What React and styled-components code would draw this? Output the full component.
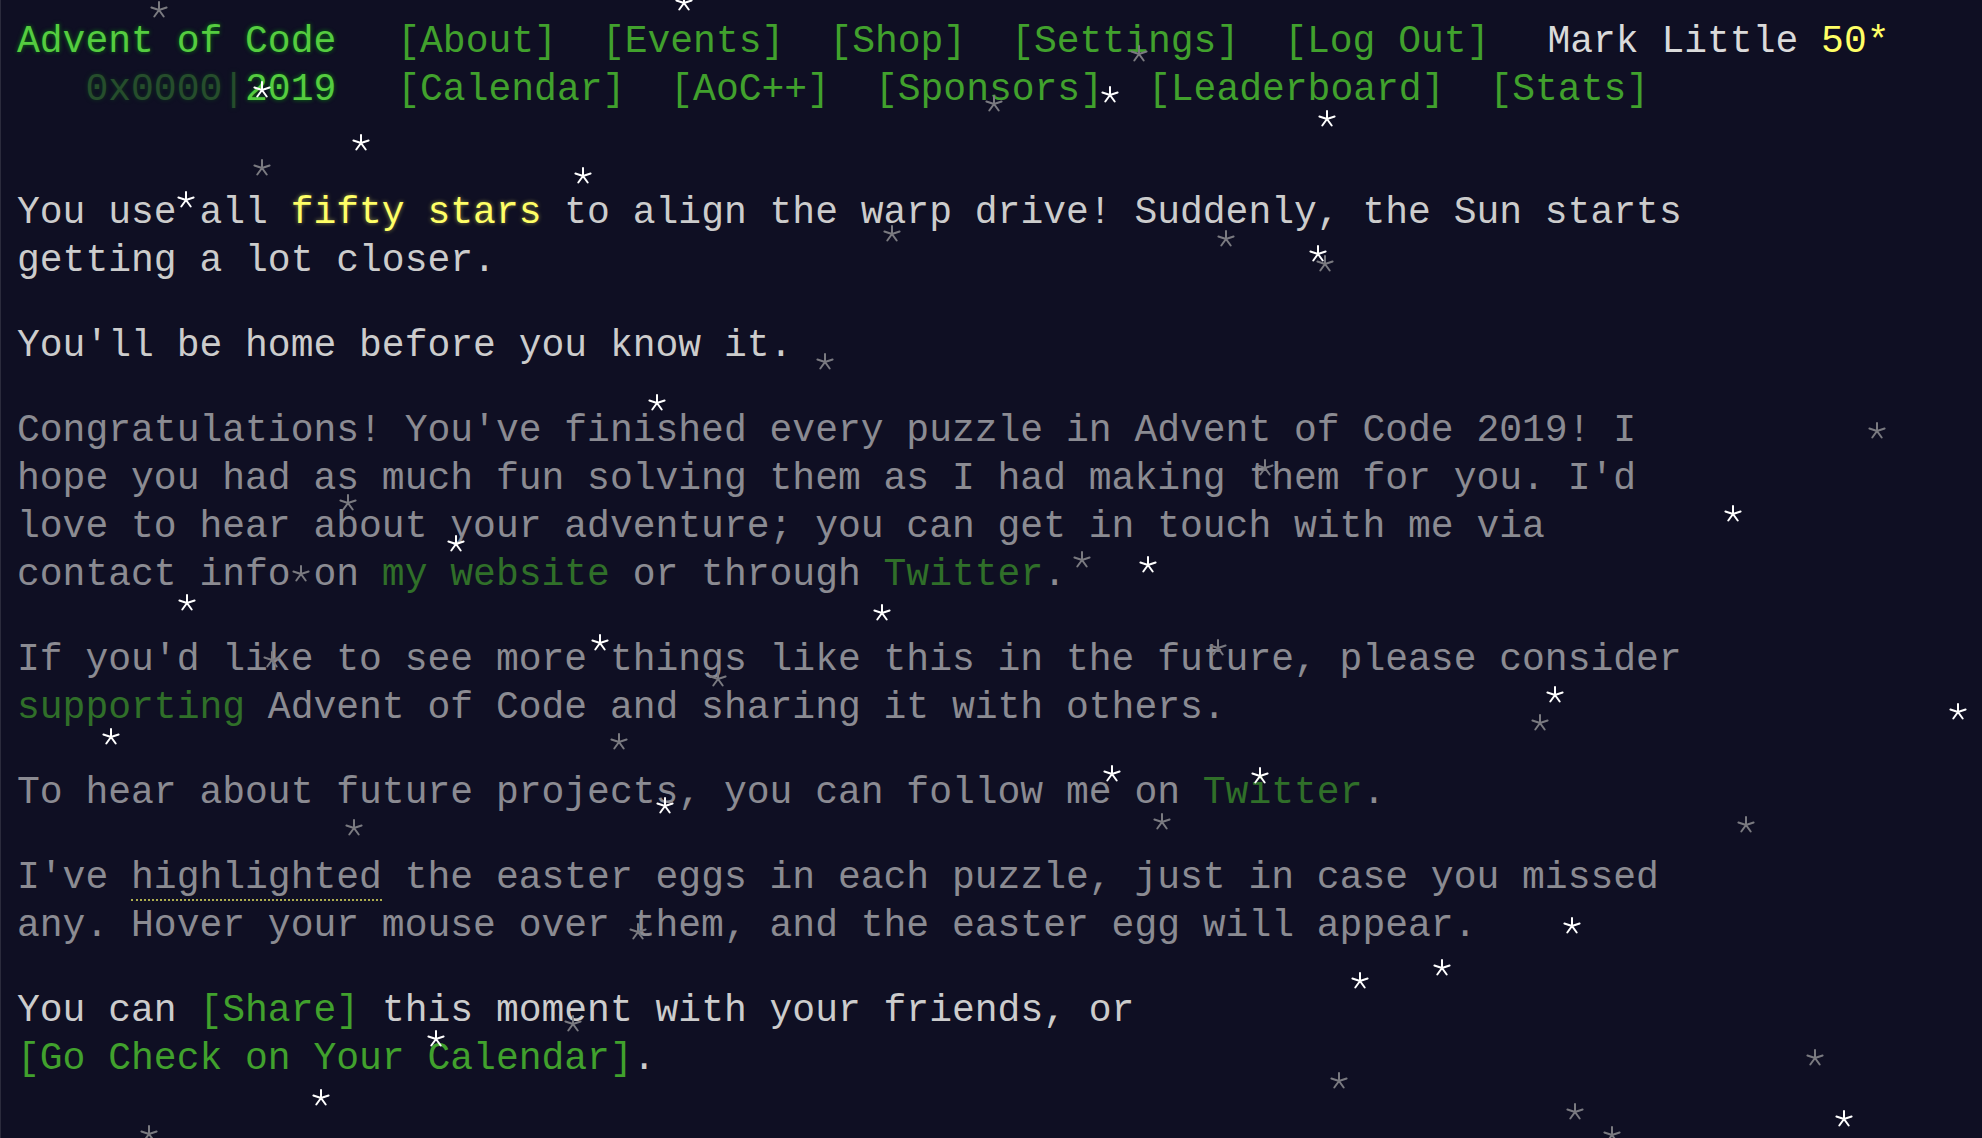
import React from "react";
import styled, { createGlobalStyle } from "styled-components";

const GlobalStyle = createGlobalStyle`
  html, body {
    margin: 0;
    padding: 0;
    background: #0f0f23;
  }
`;

const stars = [
  [159, 10, 0], [684, 3, 1], [262, 90, 1], [1139, 54, 0], [994, 104, 0],
  [1110, 95, 1], [1327, 119, 1], [361, 143, 1], [262, 168, 0], [583, 176, 1],
  [186, 200, 1], [892, 234, 0], [1226, 239, 0], [1318, 254, 1], [1325, 264, 0],
  [825, 362, 0], [657, 403, 1], [1877, 431, 0], [1265, 468, 0], [348, 503, 0],
  [1733, 514, 1], [456, 544, 1], [1082, 560, 0], [1148, 565, 1], [301, 574, 0],
  [187, 603, 1], [882, 613, 1], [600, 643, 1], [272, 660, 0], [1218, 648, 0],
  [718, 679, 0], [1555, 695, 1], [1958, 712, 1], [1540, 723, 0], [111, 737, 1],
  [619, 742, 0], [1112, 774, 1], [1260, 776, 1], [665, 806, 1], [1162, 822, 0],
  [1746, 825, 0], [354, 828, 0], [638, 932, 0], [1572, 926, 1], [1360, 981, 1],
  [1442, 968, 1], [573, 1024, 0], [436, 1039, 1], [1815, 1058, 0], [1339, 1081, 0],
  [321, 1098, 1], [1575, 1112, 0], [1844, 1119, 1], [149, 1134, 0], [1612, 1135, 0],
];

const App = () => (
  <Page>
    <GlobalStyle />
    <Header>
      <HeaderRow>
        <Title>Advent of Code</Title>
        <Nav>
          <NavLink href="#">[About]</NavLink>
          <NavLink href="#">[Events]</NavLink>
          <NavLink href="#">[Shop]</NavLink>
          <NavLink href="#">[Settings]</NavLink>
          <NavLink href="#">[Log Out]</NavLink>
          <User>
            Mark Little <StarCount>50*</StarCount>
          </User>
        </Nav>
      </HeaderRow>
      <HeaderRow>
        <Title>
          {"\u00a0\u00a0\u00a0"}
          <Faded>0x0000|</Faded>2019
        </Title>
        <Nav>
          <NavLink href="#">[Calendar]</NavLink>
          <NavLink href="#">[AoC++]</NavLink>
          <NavLink href="#">[Sponsors]</NavLink>
          <NavLink href="#">[Leaderboard]</NavLink>
          <NavLink href="#">[Stats]</NavLink>
        </Nav>
      </HeaderRow>
    </Header>

    <Article>
      <Para>
        You use all <Glow>fifty stars</Glow> to align the warp drive! Suddenly,
        the Sun starts getting a lot closer.
      </Para>
      <Para>You'll be home before you know it.</Para>
      <Para $dim>
        Congratulations! You've finished every puzzle in Advent of Code 2019! I
        hope you had as much fun solving them as I had making them for you. I'd
        love to hear about your adventure; you can get in touch with me via
        contact info on <TextLink href="#">my website</TextLink> or through{" "}
        <TextLink href="#">Twitter</TextLink>.
      </Para>
      <Para $dim>
        If you'd like to see more things like this in the future, please
        consider <TextLink href="#">supporting</TextLink> Advent of Code and
        sharing it with others.
      </Para>
      <Para $dim>
        To hear about future projects, you can follow me on{" "}
        <TextLink href="#">Twitter</TextLink>.
      </Para>
      <Para $dim>
        I've <EasterEgg>highlighted</EasterEgg> the easter eggs in each puzzle,
        just in case you missed any. Hover your mouse over them, and the easter
        egg will appear.
      </Para>
      <Para>
        You can <TextLink href="#">[Share]</TextLink> this moment with your
        friends, or <TextLink href="#">[Go Check on Your Calendar]</TextLink>.
      </Para>
    </Article>

    <StarField>
      {stars.map(([x, y, bright], i) => (
        <Star
          key={i}
          $bright={bright}
          style={{ left: x - 10, top: y - 10 }}
          viewBox="-10 -10 20 20"
        >
          <path d="M0 0L0 -8M0 0L7.6 -2.5M0 0L4.7 6.5M0 0L-4.7 6.5M0 0L-7.6 -2.5" />
        </Star>
      ))}
    </StarField>
  </Page>
);

const Page = styled.div`
  position: relative;
  height: 100vh;
  box-sizing: border-box;
  padding: 18px 17px 0;
  background: #0f0f23;
  color: #cccccc;
  font-family: "Liberation Mono", "DejaVu Sans Mono", monospace;
  font-size: 38px;
  line-height: 48px;
  overflow: hidden;
  box-shadow: inset 1px 0 0 #2b2b3c;
`;

const Header = styled.header`
  display: flex;
  flex-direction: column;
`;

const HeaderRow = styled.div`
  display: flex;
  align-items: baseline;
  white-space: pre;
`;

const Title = styled.div`
  width: 14ch;
  margin-right: 61px;
  color: #55cc40;
  text-shadow: 0 0 4px rgba(0, 204, 0, 0.55);
`;

const Faded = styled.span`
  opacity: 0.33;
`;

const Nav = styled.nav`
  display: flex;
  gap: 45px;
`;

const NavLink = styled.a`
  color: #41a12d;
  text-decoration: none;
`;

const User = styled.span`
  margin-left: 13px;
  color: #dadada;
`;

const StarCount = styled.span`
  color: #ffff66;
`;

const Article = styled.article`
  max-width: 74ch;
  margin-top: 75px;
`;

const Para = styled.p`
  margin: 0 0 37px;
  opacity: ${(p) => (p.$dim ? 0.66 : 1)};
`;

const Glow = styled.span`
  color: #ffff66;
  text-shadow: 0 0 4px rgba(255, 255, 102, 0.5);
`;

const TextLink = styled.a`
  color: #41a12d;
  text-decoration: none;
  white-space: nowrap;
`;

const EasterEgg = styled.span`
  border-bottom: 2px dotted #ffff66;
`;

const StarField = styled.div`
  position: absolute;
  inset: 0;
  pointer-events: none;
`;

const Star = styled.svg`
  position: absolute;
  width: 20px;
  height: 20px;
  fill: none;
  stroke: ${(p) => (p.$bright ? "#ffffff" : "#7a7a80")};
  stroke-width: 2;
  stroke-linecap: round;
`;

export default App;
